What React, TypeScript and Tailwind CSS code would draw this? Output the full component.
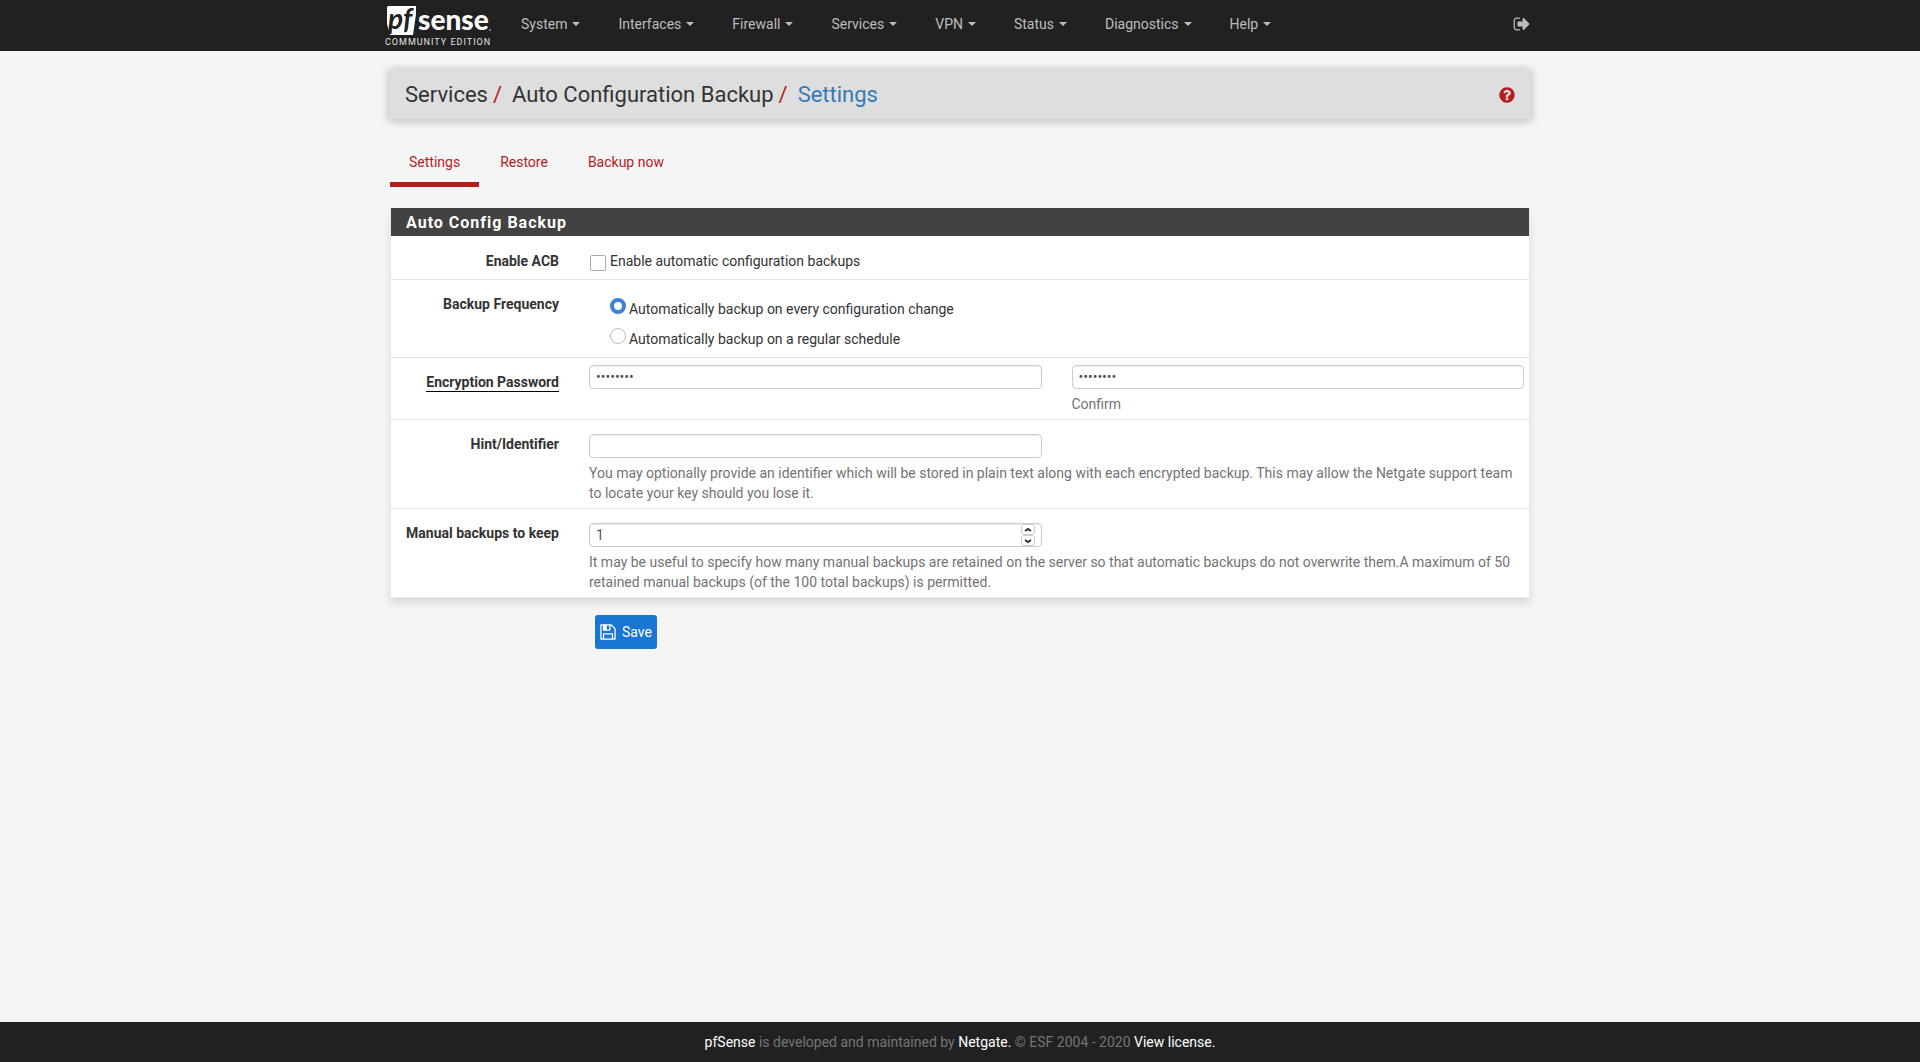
import type { ReactNode } from 'react';

const menus = ['System', 'Interfaces', 'Firewall', 'Services', 'VPN', 'Status', 'Diagnostics', 'Help'];
const tabs = ['Settings', 'Restore', 'Backup now'];

const signOut =
  'M704 1440q0 4 1 20t.5 26.5-3 23.5-10 19.5-20.5 6.5h-320q-119 0-203.5-84.5t-84.5-203.5v-704q0-119 84.5-203.5t203.5-84.5h320q13 0 22.5 9.5t9.5 22.5q0 4 1 20t.5 26.5-3 23.5-10 19.5-20.5 6.5h-320q-66 0-113 47t-47 113v704q0 66 47 113t113 47h312l11.5 1 11.5 3 8 5.5 7 9 2 13.5zm928-544q0 26-19 45l-544 544q-19 19-45 19t-45-19-19-45v-288h-448q-26 0-45-19t-19-45v-384q0-26 19-45t45-19h448v-288q0-26 19-45t45-19 45 19l544 544q19 19 19 45z';
const question =
  'M1024 1376v-192q0-14-9-23t-23-9h-192q-14 0-23 9t-9 23v192q0 14 9 23t23 9h192q14 0 23-9t9-23zm256-672q0-88-55.5-163t-138.5-116-170-41q-243 0-371 213-15 24 8 42l132 100q7 6 19 6 16 0 25-12 53-68 86-92 34-24 86-24 48 0 85.5 26t37.5 59q0 38-20 61t-68 45q-63 28-115.5 86.5t-52.5 125.5v36q0 14 9 23t23 9h192q14 0 23-9t9-23q0-19 21.5-49.5t54.5-49.5q32-18 49-28.5t46-35 44.5-48 28-60.5 12.5-81zm384 192q0 209-103 385.5t-279.5 279.5-385.5 103-385.5-103-279.5-279.5-103-385.5 103-385.5 279.5-279.5 385.5-103 385.5 103 279.5 279.5 103 385.5z';
const floppy =
  'M512 1536h768v-384h-768v384zm896 0h128v-896q0-14-10-38.5t-20-34.5l-281-281q-10-10-34-20t-39-10v416q0 40-28 68t-68 28h-576q-40 0-68-28t-28-68v-416h-128v1280h128v-416q0-40 28-68t68-28h832q40 0 68 28t28 68v416zm-384-928v-320q0-13-9.5-22.5t-22.5-9.5h-192q-13 0-22.5 9.5t-9.5 22.5v320q0 13 9.5 22.5t22.5 9.5h192q13 0 22.5-9.5t9.5-22.5zm640 32v928q0 40-28 68t-68 28h-1344q-40 0-68-28t-28-68v-1344q0-40 28-68t68-28h928q40 0 88 20t76 48l280 280q28 28 48 76t20 88z';

function Icon({ d, className }: { d: string; className: string }) {
  return (
    <svg viewBox="0 0 1792 1792" fill="currentColor" aria-hidden="true" className={className}>
      <path d={d} />
    </svg>
  );
}

function Logo() {
  return (
    <svg viewBox="0 0 108 48" className="h-12 w-[108px] shrink-0" role="img" aria-label="pfSense Community Edition">
      <path d="M3 6H31V14L28 35H5L2 24V7Z" fill="#fff" />
      <text x="3" y="29" fontFamily="Lato" fontSize="28" fontWeight="700" fontStyle="italic" fill="#212121">p</text>
      <text x="18" y="29" fontFamily="Lato" fontSize="28" fontWeight="700" fontStyle="italic" fill="#212121">f</text>
      <text x="33" y="30" fontFamily="Lato" fontSize="28" fontWeight="900" fill="#fff">sense</text>
      <circle cx="105" cy="30" r="1" fill="#999" />
      <text x="0" y="45" fontFamily="Roboto" fontSize="9" letterSpacing="1" fill="#e0e0e0">COMMUNITY EDITION</text>
    </svg>
  );
}

const inputClass =
  'block h-6 w-full rounded border border-[#ccc] bg-white px-[6px] text-sm text-[#555] shadow-[inset_0_1px_1px_rgba(0,0,0,0.075)] outline-none';
const radioClass =
  'size-4 shrink-0 appearance-none rounded-full border border-[#bbb] bg-white checked:border-4 checked:border-[#3b82d6]';
const rowClass = '-mx-[10px] grid grid-cols-[2fr_5fr_5fr]';
const labelClass = 'px-[15px] pt-[14px] text-right font-bold';

function Divider() {
  return <div className="h-px bg-[#e0e0e0]" />;
}

function Help({ children }: { children: ReactNode }) {
  return <p className="pt-[5px] text-[#737373]">{children}</p>;
}

export default function App() {
  return (
    <div className="flex min-h-screen flex-col bg-[#f5f5f5] font-[Roboto,sans-serif] text-sm leading-5 text-[#333]">
      <header className="bg-[#212121]">
        <div className="mx-auto flex h-[51px] max-w-[1150px] items-start">
          <a href="#"><Logo /></a>
          <nav className="flex flex-1 pt-[14px] pl-[9px]">
            {menus.map((m) => (
              <button key={m} type="button" className="flex items-center gap-[5px] px-[19px] text-[#bdbdbd]">
                {m}
                <span className="border-x-4 border-t-4 border-x-transparent border-t-[#bdbdbd]" />
              </button>
            ))}
          </nav>
          <a href="#" aria-label="Logout" className="mt-[15px] mr-1 text-[#bdbdbd]">
            <Icon d={signOut} className="size-[18px]" />
          </a>
        </div>
      </header>

      <main className="mx-auto w-full max-w-[1140px] flex-1">
        <div className="mt-[19px] flex h-[49px] items-center justify-between bg-[#dedede] pr-[14px] pl-[15px] shadow-[0_1px_8px_2px_rgba(0,0,0,0.2)]">
          <ol className="flex text-[22px] leading-8">
            <li>Services<span className="px-[5px] text-[#b71c1c]">/</span></li>
            <li className="pl-[5px]">Auto Configuration Backup<span className="px-[5px] text-[#b71c1c]">/</span></li>
            <li className="pl-[5px]"><a href="#" className="text-[#337ab7]">Settings</a></li>
          </ol>
          <a href="#" aria-label="Help" className="text-[#b71c1c]">
            <Icon d={question} className="size-[18px]" />
          </a>
        </div>

        <nav className="mt-[33px] flex gap-[2px]">
          {tabs.map((t, i) => (
            <a
              key={t}
              href="#"
              className={
                i === 0
                  ? 'border-b-[5px] border-[#b71c1c] px-[19px] pb-[10px] text-[#b71c1c]'
                  : 'px-[19px] pb-[15px] text-[#b71c1c]'
              }
            >
              {t}
            </a>
          ))}
        </nav>

        <form>
          <section className="mt-[21px] border border-t-0 border-[#e8e8e8] bg-white shadow-[0_6px_8px_rgba(0,0,0,0.1)]">
            <h2 className="bg-[#424242] px-[15px] pt-[5px] pb-[3px] text-base leading-5 font-bold tracking-[1px] text-white">Auto Config Backup</h2>

            <div className={`${rowClass} pt-px`}>
              <label htmlFor="acb" className={labelClass}>Enable ACB</label>
              <div className="col-span-2 flex gap-1 px-[15px] pt-[14px] pb-2">
                <input id="acb" type="checkbox" className="mt-1 ml-px size-4 appearance-none rounded-xs border border-[#aaa] bg-white" />
                <label htmlFor="acb">Enable automatic configuration backups</label>
              </div>
            </div>
            <Divider />

            <div className={rowClass}>
              <span className={labelClass}>Backup Frequency</span>
              <div className="col-span-2 flex flex-col gap-[9px] pt-[18px] pb-2 pl-9">
                <label className="flex items-start gap-[3px]">
                  <input type="radio" name="freq" defaultChecked className={radioClass} />
                  <span className="pt-[1px]">Automatically backup on every configuration change</span>
                </label>
                <label className="flex items-start gap-[3px]">
                  <input type="radio" name="freq" className={radioClass} />
                  <span className="pt-[1px]">Automatically backup on a regular schedule</span>
                </label>
              </div>
            </div>
            <Divider />

            <div className={rowClass}>
              <label htmlFor="pw" className={labelClass}>
                <span className="inline-block border-b border-black leading-[18px]">Encryption Password</span>
              </label>
              <div className="px-[15px] pt-[7px]">
                <input id="pw" type="password" defaultValue="password" className={inputClass} />
              </div>
              <div className="px-[15px] pt-[7px] pb-[5px]">
                <input id="pw2" type="password" defaultValue="password" className={inputClass} />
                <label htmlFor="pw2" className="block pt-[5px] text-[#737373]">Confirm</label>
              </div>
            </div>
            <Divider />

            <div className={rowClass}>
              <label htmlFor="hint" className={labelClass}>Hint/Identifier</label>
              <div className="px-[15px] pt-[14px]">
                <input id="hint" type="text" className={inputClass} />
              </div>
              <div className="col-span-2 col-start-2 px-[15px] pb-[5px]">
                <Help>
                  You may optionally provide an identifier which will be stored in plain text along with each encrypted backup.
                  This may allow the Netgate support team to locate your key should you lose it.
                </Help>
              </div>
            </div>
            <Divider />

            <div className={rowClass}>
              <label htmlFor="keep" className={labelClass}>Manual backups to keep</label>
              <div className="px-[15px] pt-[14px]">
                <div className="relative">
                  <input
                    id="keep"
                    type="number"
                    defaultValue={1}
                    className={`${inputClass} [appearance:textfield]`}
                  />
                  <div className="absolute top-px right-[7px] flex flex-col">
                    {['M3 6L6 4L9 6', 'M3 4L6 6L9 4'].map((d, i) => (
                      <button
                        key={d}
                        type="button"
                        aria-label={i === 0 ? 'Increase' : 'Decrease'}
                        className="h-[11px] w-[14px] rounded-[3px] border border-[#ccc] bg-white"
                      >
                        <svg viewBox="0 0 12 9" className="h-[9px] w-3" fill="none" stroke="#333" strokeWidth="2">
                          <path d={d} />
                        </svg>
                      </button>
                    ))}
                  </div>
                </div>
              </div>
              <div className="col-span-2 col-start-2 px-[15px] pb-[5px]">
                <Help>
                  It may be useful to specify how many manual backups are retained on the server so that automatic backups do
                  not overwrite them.A maximum of 50 retained manual backups (of the 100 total backups) is permitted.
                </Help>
              </div>
            </div>
          </section>

          <div className="grid grid-cols-[205px_1fr] pt-[17px]">
            <button
              type="submit"
              className="col-start-2 flex h-[34px] items-center gap-[5px] justify-self-start rounded-[3px] bg-[#1976d2] pr-[5px] pl-1 text-white"
            >
              <Icon d={floppy} className="size-[18px]" />
              Save
            </button>
          </div>
        </form>
      </main>

      <footer className="bg-[#212121] py-[10px] text-center text-[#757575]">
        <a href="#" className="text-white">pfSense</a> is developed and maintained by{' '}
        <a href="#" className="text-white">Netgate.</a> © ESF 2004 - 2020{' '}
        <a href="#" className="text-white">View license.</a>
      </footer>
    </div>
  );
}
